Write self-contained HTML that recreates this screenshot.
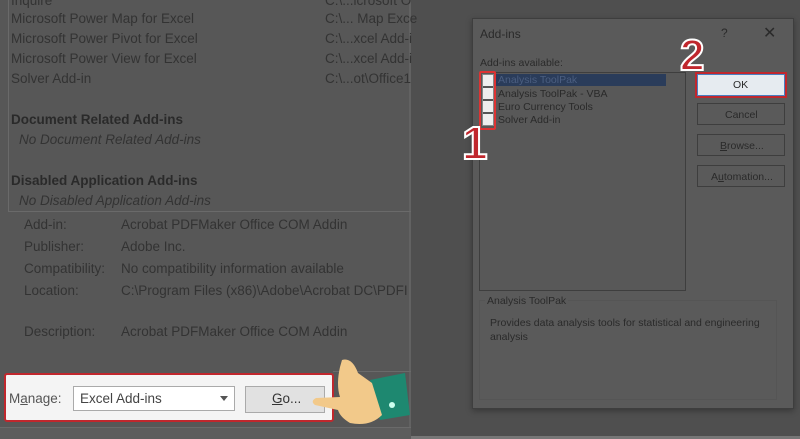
<!DOCTYPE html>
<html><head><style>
*{margin:0;padding:0;box-sizing:border-box}
body{width:800px;height:439px;overflow:hidden;background:#4f4f4f;font-family:"Liberation Sans",sans-serif;position:relative}
.a{position:absolute;white-space:nowrap}
.l{color:#333;font-size:13.5px}
.r{color:#2a2a2a;font-size:10.5px}
</style></head><body>
<div class="a" style="left:0;top:0;width:411px;height:439px;background:#575757"></div>
<div class="a" style="left:409px;top:0;width:2px;height:439px;background:#626262"></div>
<div class="a" style="left:8px;top:0;width:403px;height:212px;border-left:1px solid #6a6a6a;border-bottom:1px solid #6a6a6a"></div>
<div class="a l" style="left:11px;top:-7px">Inquire</div>
<div class="a l" style="left:325px;top:-7px">C:\...icrosoft O</div>
<div class="a l" style="left:11px;top:11px">Microsoft Power Map for Excel</div>
<div class="a l" style="left:325px;top:11px">C:\... Map Exce</div>
<div class="a l" style="left:11px;top:31px">Microsoft Power Pivot for Excel</div>
<div class="a l" style="left:325px;top:31px">C:\...xcel Add-i</div>
<div class="a l" style="left:11px;top:51px">Microsoft Power View for Excel</div>
<div class="a l" style="left:325px;top:51px">C:\...xcel Add-i</div>
<div class="a l" style="left:11px;top:71px">Solver Add-in</div>
<div class="a l" style="left:325px;top:71px">C:\...ot\Office1</div>
<div class="a l" style="left:11px;top:112px;font-weight:bold;color:#2a2a2a">Document Related Add-ins</div>
<div class="a l" style="left:19px;top:132px;font-style:italic">No Document Related Add-ins</div>
<div class="a l" style="left:11px;top:173px;font-weight:bold;color:#2a2a2a">Disabled Application Add-ins</div>
<div class="a l" style="left:19px;top:193px;font-style:italic">No Disabled Application Add-ins</div>
<div class="a l" style="left:24px;top:217px">Add-in:</div><div class="a l" style="left:121px;top:217px">Acrobat PDFMaker Office COM Addin</div>
<div class="a l" style="left:24px;top:239px">Publisher:</div><div class="a l" style="left:121px;top:239px">Adobe Inc.</div>
<div class="a l" style="left:24px;top:261px">Compatibility:</div><div class="a l" style="left:121px;top:261px">No compatibility information available</div>
<div class="a l" style="left:24px;top:283px">Location:</div><div class="a l" style="left:121px;top:283px">C:\Program Files (x86)\Adobe\Acrobat DC\PDFI</div>
<div class="a l" style="left:24px;top:324px">Description:</div><div class="a l" style="left:121px;top:324px">Acrobat PDFMaker Office COM Addin</div>
<div class="a" style="left:333px;top:371px;width:78px;height:1px;background:#6a6a6a"></div>
<div class="a" style="left:0;top:427px;width:411px;height:12px;background:#5d5d5d;border-top:1px solid #6a6a6a"></div>
<div class="a" style="left:4px;top:373px;width:330px;height:49px;background:#f4f4f4;border:2px solid #c0272d;border-radius:3px"></div>
<div class="a" style="left:9px;top:391px;font-size:13.5px;color:#555">M<u>a</u>nage:</div>
<div class="a" style="left:73px;top:386px;width:162px;height:25px;background:#fff;border:1px solid #aaa"></div>
<div class="a" style="left:80px;top:391px;font-size:13.5px;color:#444">Excel Add-ins</div>
<div class="a" style="left:220px;top:396px;border-left:4px solid transparent;border-right:4px solid transparent;border-top:5px solid #555"></div>
<div class="a" style="left:245px;top:386px;width:80px;height:27px;background:#e1e1e1;border:1px solid #aaa"></div>
<div class="a" style="left:272px;top:391px;font-size:13.5px;color:#333"><u>G</u>o...</div>
<svg class="a" style="left:310px;top:355px" width="100" height="75" viewBox="0 0 100 75">
<path d="M60 25 L95 18 L100 60 L70 65 Z" fill="#1e8870"/>
<circle cx="82" cy="50" r="3" fill="#cfe"/>
<path d="M32 5 Q42 2 48 18 L62 28 L72 60 Q60 72 40 68 Q30 62 28 55 L5 50 Q0 46 6 43 L30 42 Q26 30 30 12 Z" fill="#f2c98a"/>
</svg>
<div class="a" style="left:472px;top:18px;width:322px;height:391px;background:#5a5a5a;border:1px solid #3e3e3e;box-shadow:0 2px 6px rgba(0,0,0,.3)"></div>
<div class="a r" style="left:480px;top:27px;font-size:12px">Add-ins</div>
<div class="a r" style="left:721px;top:26px;font-size:12px">?</div>
<div class="a r" style="left:763px;top:23px;font-size:16px">✕</div>
<div class="a r" style="left:480px;top:57px">Add-ins available:</div>
<div class="a" style="left:479px;top:72px;width:207px;height:219px;border:1px solid #3e3e3e;background:#585858"></div>
<div class="a" style="left:496px;top:74px;width:170px;height:12px;background:#2a3c5a"></div>
<div class="a r" style="left:498px;top:74px;color:#4b5e80">Analysis ToolPak</div>
<div class="a r" style="left:498px;top:88px">Analysis ToolPak - VBA</div>
<div class="a r" style="left:498px;top:101px">Euro Currency Tools</div>
<div class="a r" style="left:498px;top:114px">Solver Add-in</div>
<div class="a" style="left:482px;top:74px;width:12px;height:52px;background:repeating-linear-gradient(#eee 0 11px,#555 11px 13px);border:1px solid #888"></div>
<div class="a" style="left:479px;top:71px;width:17px;height:59px;border:2px solid #d33;border-radius:2px"></div>
<div class="a" style="left:462px;top:120px;font:bold 46px 'Liberation Sans';color:#c0272d;-webkit-text-stroke:2px #fff;line-height:1">1</div>
<div class="a" style="left:680px;top:34px;font:bold 44px 'Liberation Sans';color:#c0272d;-webkit-text-stroke:2px #fff;line-height:1">2</div>
<div class="a" style="left:695px;top:72px;width:92px;height:26px;background:#e6ebf0;border:2px solid #c0272d;box-shadow:inset 0 0 0 1px #4a7fc0"></div>
<div class="a r" style="left:733px;top:79px">OK</div>
<div class="a" style="left:697px;top:103px;width:88px;height:22px;border:1px solid #3e3e3e"></div>
<div class="a r" style="left:725px;top:109px">Cancel</div>
<div class="a" style="left:697px;top:134px;width:88px;height:22px;border:1px solid #3e3e3e"></div>
<div class="a r" style="left:720px;top:140px"><u>B</u>rowse...</div>
<div class="a" style="left:697px;top:165px;width:88px;height:22px;border:1px solid #3e3e3e"></div>
<div class="a r" style="left:711px;top:171px">A<u>u</u>tomation...</div>
<div class="a" style="left:479px;top:300px;width:298px;height:100px;border:1px solid #555"></div>
<div class="a r" style="left:485px;top:295px;background:#5a5a5a;padding:0 2px">Analysis ToolPak</div>
<div class="a r" style="left:490px;top:316px;line-height:14px">Provides data analysis tools for statistical and engineering<br>analysis</div>
<div class="a" style="left:411px;top:436px;width:389px;height:3px;background:#777"></div>
</body></html>
